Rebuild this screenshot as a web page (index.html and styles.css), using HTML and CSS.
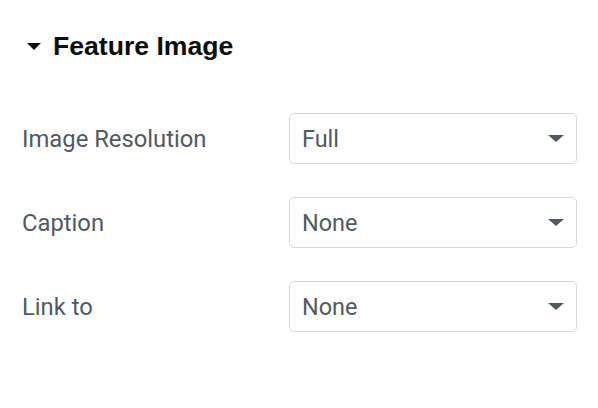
FILE: index.html
```html
<!DOCTYPE html>
<html lang="en">
<head>
    <meta charset="UTF-8">
    <meta name="viewport" content="width=device-width, initial-scale=1.0">
    <title>Feature Image</title>
    <link rel="stylesheet" href="styles.css">
</head>
<body>

    <div class="panel">
        <div class="section-title">
            <span class="caret"></span>
            Feature Image
        </div>

        <div class="control">
            <label>Image Resolution</label>
            <div class="select">
                <span>Full</span>
                <i class="arrow"></i>
            </div>
        </div>
        <div class="control">
            <label>Caption</label>
            <div class="select">
                <span>None</span>
                <i class="arrow"></i>
            </div>
        </div>
        <div class="control">
            <label>Link to</label>
            <div class="select">
                <span>None</span>
                <i class="arrow"></i>
            </div>
        </div>
    </div>

</body>
</html>
```

FILE: styles.css
```css
/* Panel section layout */
body {
    margin: 0;
    background-color: #fff;
    font-family: Roboto, Arial, sans-serif;
}

.panel {
    width: 598px;
    padding: 30px 21px 0 22px;
    box-sizing: border-box;
}

.section-title {
    display: flex;
    align-items: center;
    height: 32px;
    font-family: "Liberation Sans", Arial, sans-serif;
    font-size: 26.6px;
    font-weight: bold;
    color: #0c0d0e;
    margin-bottom: 51px;
}

.caret {
    width: 0;
    height: 0;
    margin: 0 12px 0 5px;
    border-left: 7px solid transparent;
    border-right: 7px solid transparent;
    border-top: 7px solid #0c0d0e;
}

.control {
    display: flex;
    align-items: center;
    justify-content: space-between;
    margin-bottom: 33px;
}

label {
    font-size: 23.8px;
    color: #515962;
}

.select {
    display: flex;
    align-items: center;
    justify-content: space-between;
    width: 288px;
    height: 51px;
    padding: 0 12px 0 12px;
    box-sizing: border-box;
    border: 1.5px solid #d5d8dc;
    border-radius: 5px;
    font-size: 23.4px;
    color: #515962;
}

.arrow {
    width: 0;
    height: 0;
    border-left: 8px solid transparent;
    border-right: 8px solid transparent;
    border-top: 7px solid #515962;
}
```
